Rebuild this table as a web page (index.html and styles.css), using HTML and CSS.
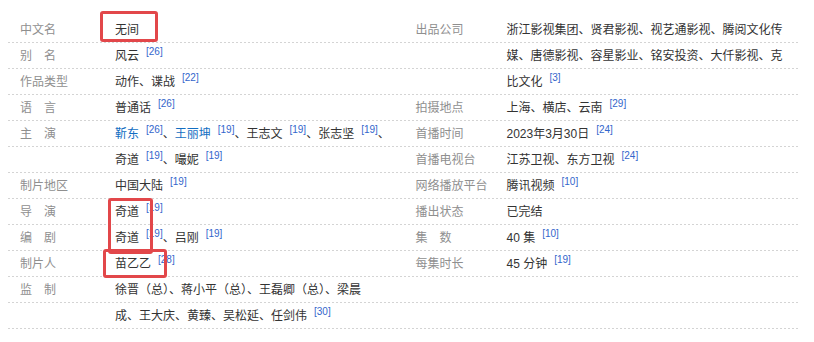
FILE: index.html
```html
<!DOCTYPE html>
<html lang="zh-CN">
<head>
<meta charset="utf-8">
<title>无间 基本信息</title>
<link rel="stylesheet" href="styles.css">
</head>
<body>
<div class="basic-info">
  <dl class="col col-left">
    <dt>中文名</dt><dd>无间</dd>
    <dt>别　名</dt><dd>风云<sup>[26]</sup></dd>
    <dt>作品类型</dt><dd>动作、谍战<sup>[22]</sup></dd>
    <dt>语　言</dt><dd>普通话<sup>[26]</sup></dd>
    <dt>主　演</dt><dd><a class="link">靳东</a><sup>[26]</sup>、<a class="link">王丽坤</a><sup>[19]</sup>、王志文<sup>[19]</sup>、张志坚<sup>[19]</sup>、<br>奇道<sup>[19]</sup>、嘬妮<sup>[19]</sup></dd>
    <dt>制片地区</dt><dd>中国大陆<sup>[19]</sup></dd>
    <dt>导　演</dt><dd>奇道<sup>[19]</sup></dd>
    <dt>编　剧</dt><dd>奇道<sup>[19]</sup>、吕刚<sup>[19]</sup></dd>
    <dt>制片人</dt><dd>苗乙乙<sup>[28]</sup></dd>
    <dt>监　制</dt><dd>徐晋（总）、蒋小平（总）、王磊卿（总）、梁晨<br>成、王大庆、黄臻、吴松延、任剑伟<sup>[30]</sup></dd>
  </dl>
  <dl class="col col-right">
    <dt>出品公司</dt><dd>浙江影视集团、贤君影视、视艺通影视、腾阅文化传<br>媒、唐德影视、容星影业、铭安投资、大仟影视、克<br>比文化<sup>[3]</sup></dd>
    <dt>拍摄地点</dt><dd>上海、横店、云南<sup>[29]</sup></dd>
    <dt>首播时间</dt><dd>2023年3月30日<sup>[24]</sup></dd>
    <dt>首播电视台</dt><dd>江苏卫视、东方卫视<sup>[24]</sup></dd>
    <dt>网络播放平台</dt><dd>腾讯视频<sup>[10]</sup></dd>
    <dt>播出状态</dt><dd>已完结</dd>
    <dt>集　数</dt><dd>40 集<sup>[10]</sup></dd>
    <dt>每集时长</dt><dd>45 分钟<sup>[19]</sup></dd>
  </dl>
</div>
<div class="mark mark-name"></div>
<div class="mark mark-director"></div>
<div class="mark mark-producer"></div>
</body>
</html>
```

FILE: styles.css
```css
html, body {
  margin: 0;
  padding: 0;
  background: #fff;
}

body {
  position: relative;
  width: 814px;
  height: 342px;
  overflow: hidden;
  font-family: "Liberation Sans", "Noto Sans CJK SC", sans-serif;
  font-size: 12px;
  color: #333;
}

.basic-info {
  display: flex;
  padding: 17px 15px 0 8px;
}

.col {
  flex: 1;
  margin: 0;
  display: grid;
  align-content: start;
  line-height: 26px;
  padding-left: 12px;
  min-height: 312px;
  background-image:
    linear-gradient(#fff 25px, transparent 25px),
    linear-gradient(to right, #d4d4d4 2px, transparent 2px);
  background-size: 100% 26px, 4px 100%;
}

.col-left {
  grid-template-columns: 95px 1fr;
}

.col-right {
  grid-template-columns: 91px 1fr;
}

.col dt {
  color: #8f8f8f;
  white-space: nowrap;
}

.col dd {
  margin: 0;
  white-space: nowrap;
}

.link {
  color: #136ec2;
  text-decoration: none;
}

sup {
  font-size: 10px;
  line-height: 10px;
  vertical-align: 5px;
  color: #3366cc;
  margin-left: 7px;
  font-family: "Liberation Sans", sans-serif;
}

.mark {
  position: absolute;
  border: 3px solid #e2474a;
  border-radius: 3px;
  box-sizing: border-box;
}

.mark-name {
  left: 100px;
  top: 11px;
  width: 58px;
  height: 31px;
}

.mark-director {
  left: 108px;
  top: 198px;
  width: 45px;
  height: 56px;
}

.mark-producer {
  left: 103px;
  top: 249px;
  width: 64px;
  height: 29px;
}
```
